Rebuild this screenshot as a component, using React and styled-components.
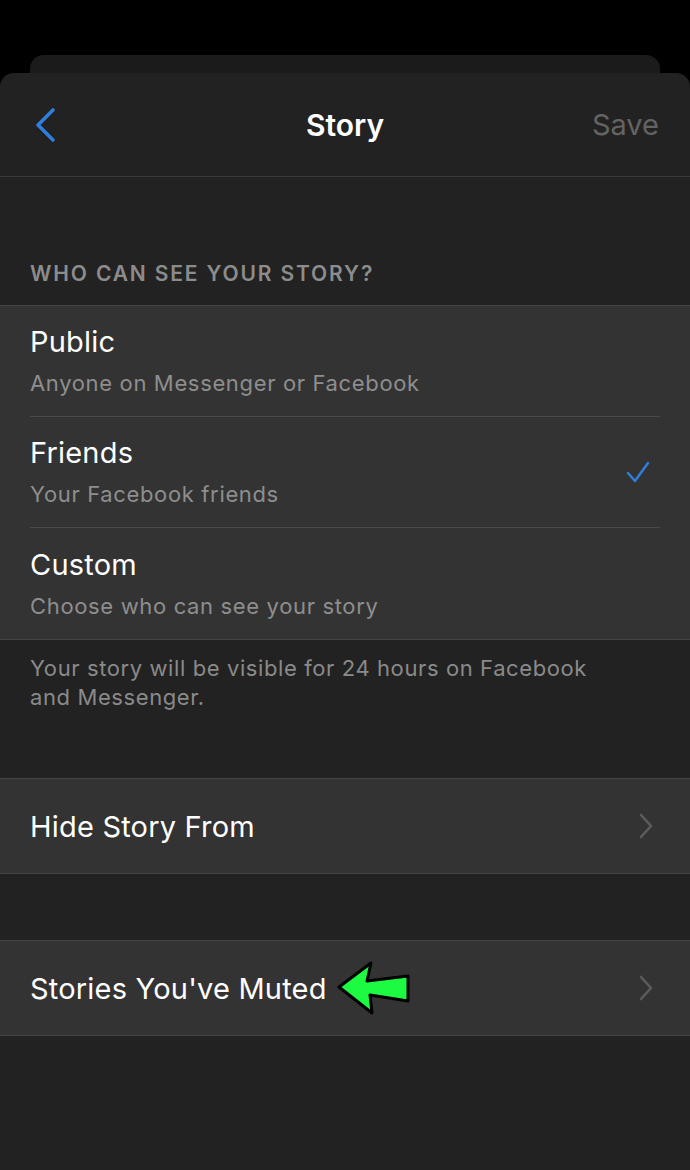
import React from 'react';
import styled, { createGlobalStyle } from 'styled-components';

const GlobalStyle = createGlobalStyle`
  html, body {
    margin: 0;
    padding: 0;
    background: #000;
  }
  body {
    font-family: Inter, "Noto Sans", sans-serif;
    -webkit-font-smoothing: antialiased;
  }
`;

const Screen = styled.div`
  width: 690px;
  height: 1170px;
  padding-top: 55px;
  box-sizing: border-box;
  background: #000;
  display: flex;
  flex-direction: column;
  overflow: hidden;
`;

const BackSheet = styled.div`
  height: 18px;
  margin: 0 30px;
  background: #1b1b1c;
  border-radius: 14px 14px 0 0;
`;

const Sheet = styled.div`
  flex: 1;
  background: #222222;
  border-radius: 14px 14px 0 0;
  display: flex;
  flex-direction: column;
`;

const NavBar = styled.div`
  height: 104px;
  display: grid;
  grid-template-columns: 120px 1fr 120px;
  align-items: center;
  border-bottom: 1px solid #3a3a3a;
  box-sizing: border-box;
`;

const BackButton = styled.div`
  padding-left: 34px;
  display: flex;
  align-items: center;
`;

const Title = styled.div`
  text-align: center;
  color: #fff;
  font-size: 30px;
  font-weight: 600;
`;

const SaveButton = styled.div`
  text-align: right;
  padding-right: 31px;
  color: #636363;
  font-size: 29px;
`;

const SectionHeader = styled.div`
  padding: 82px 30px 16px;
  line-height: 30px;
  font-size: 21px;
  font-weight: 600;
  color: #8c8c8c;
  letter-spacing: 1.85px;
`;

const Group = styled.div`
  background: #333333;
  border-top: 1px solid #444;
  border-bottom: 1px solid #444;
  margin-top: ${p => p.$top || 0}px;
`;

const OptionRow = styled.div`
  height: 111px;
  margin-left: 30px;
  box-sizing: border-box;
  display: flex;
  align-items: center;
  border-bottom: ${p => (p.$last ? 'none' : '1px solid #4a4a4a')};
  margin-right: ${p => (p.$last ? 0 : 30)}px;
  padding-right: ${p => (p.$last ? 30 : 0)}px;
`;

const OptionText = styled.div`
  flex: 1;
  display: flex;
  flex-direction: column;
`;

const OptionTitle = styled.div`
  color: #fff;
  font-size: 29px;
  line-height: 34px;
  letter-spacing: 0.2px;
`;

const OptionSub = styled.div`
  margin-top: 10px;
  color: #8e8e8e;
  font-size: 22px;
  line-height: 28px;
  letter-spacing: 0.65px;
`;

const CheckWrap = styled.div`
  padding-right: 9px;
  display: flex;
`;

const Footer = styled.div`
  padding: 14px 30px 66px;
  color: #8a8a8a;
  font-size: 22px;
  line-height: 29px;
  letter-spacing: 0.6px;
  width: 570px;
`;

const LinkRow = styled.div`
  height: 94px;
  padding: 0 36px 0 30px;
  display: flex;
  align-items: center;
  color: #fff;
  font-size: 29px;
  letter-spacing: 0.2px;
`;

const LinkLabel = styled.div`
  flex: 1;
  display: flex;
  align-items: center;
  gap: 10px;
`;

const Chevron = () => (
  <svg width="16" height="26" viewBox="0 0 16 26" fill="none">
    <path d="M3 2l10 11L3 24" stroke="#5c5c5c" strokeWidth="2.6" strokeLinecap="round" strokeLinejoin="round" />
  </svg>
);

const BackIcon = () => (
  <svg width="22" height="36" viewBox="0 0 22 36" fill="none">
    <path d="M19 3L4 18l15 15" stroke="#2e7fdc" strokeWidth="3.6" strokeLinecap="round" strokeLinejoin="round" />
  </svg>
);

const Check = () => (
  <svg width="26" height="24" viewBox="0 0 26 24" fill="none">
    <path d="M3 13l7 8L23 3" stroke="#2e7fdc" strokeWidth="2.5" strokeLinecap="round" strokeLinejoin="round" />
  </svg>
);

const PointerArrow = () => (
  <svg width="74" height="56" viewBox="0 0 74 56" fill="none">
    <polygon
      points="2,27 34,3 30,21 71,16 71,41 33,35 35,53"
      fill="#1cfb41"
      stroke="#000"
      strokeWidth="3"
      strokeLinejoin="round"
    />
  </svg>
);

const options = [
  { title: 'Public', sub: 'Anyone on Messenger or Facebook' },
  { title: 'Friends', sub: 'Your Facebook friends', checked: true },
  { title: 'Custom', sub: 'Choose who can see your story' },
];

export default function App() {
  return (
    <>
      <GlobalStyle />
      <Screen>
        <BackSheet />
        <Sheet>
          <NavBar>
            <BackButton>
              <BackIcon />
            </BackButton>
            <Title>Story</Title>
            <SaveButton>Save</SaveButton>
          </NavBar>

          <SectionHeader>WHO CAN SEE YOUR STORY?</SectionHeader>
          <Group>
            {options.map((o, i) => (
              <OptionRow key={o.title} $last={i === options.length - 1}>
                <OptionText>
                  <OptionTitle>{o.title}</OptionTitle>
                  <OptionSub>{o.sub}</OptionSub>
                </OptionText>
                {o.checked && (
                  <CheckWrap>
                    <Check />
                  </CheckWrap>
                )}
              </OptionRow>
            ))}
          </Group>
          <Footer>Your story will be visible for 24 hours on Facebook and Messenger.</Footer>

          <Group>
            <LinkRow>
              <LinkLabel>Hide Story From</LinkLabel>
              <Chevron />
            </LinkRow>
          </Group>

          <Group $top={66}>
            <LinkRow>
              <LinkLabel>
                Stories You've Muted
                <PointerArrow />
              </LinkLabel>
              <Chevron />
            </LinkRow>
          </Group>
        </Sheet>
      </Screen>
    </>
  );
}
